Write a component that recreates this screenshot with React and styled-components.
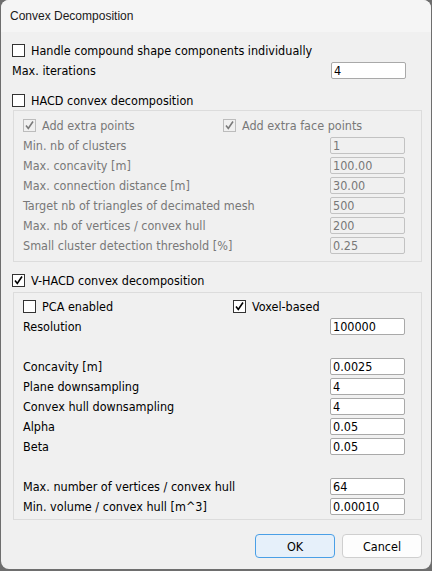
import React from 'react';
import styled, { createGlobalStyle } from 'styled-components';

const GlobalStyle = createGlobalStyle`
  html, body {
    margin: 0;
    padding: 0;
    background: #6e6e6e;
  }
  * { box-sizing: border-box; }
`;

const Window = styled.div`
  width: 430px;
  height: 569px;
  margin: 0 1px;
  background: #f0f0f0;
  border-radius: 8px;
  overflow: hidden;
  display: flex;
  flex-direction: column;
  font-family: "DejaVu Sans Condensed", "DejaVu Sans", sans-serif;
  font-size: 12.5px;
  color: #000;
`;

const TitleBar = styled.div`
  height: 32px;
  flex: none;
  background: #f5f5f5;
  display: flex;
  align-items: center;
  padding-left: 9px;
  font-family: "Liberation Sans", Arial, sans-serif;
  font-size: 12px;
  color: #1a1a1a;
`;

const Body = styled.div`
  flex: 1;
  padding: 8px 9px 0 11px;
  display: flex;
  flex-direction: column;
`;

const Section = styled.div`
  padding-right: 16px;
`;

const Row = styled.div`
  height: 20px;
  display: grid;
  grid-template-columns: ${(p) => (p.$split ? `${p.$split}px 1fr` : '1fr 75px')};
  align-items: center;
  color: ${(p) => (p.$disabled ? '#787878' : '#000')};
`;

const CheckLabel = styled.label`
  display: flex;
  align-items: center;
  gap: 6px;
  white-space: nowrap;
  color: ${(p) => (p.$disabled ? '#787878' : '#000')};
`;

const Box = styled.span`
  width: 13px;
  height: 13px;
  flex: none;
  border: 1px solid ${(p) => (p.$disabled ? '#bcbcbc' : '#333')};
  background: ${(p) => (p.$disabled ? '#f0f0f0' : '#fff')};
  display: flex;
  align-items: center;
  justify-content: center;
`;

const Field = styled.div`
  height: 17px;
  border: 1px solid ${(p) => (p.$disabled ? '#c2c2c2' : '#a9a9a9')};
  border-radius: 2px;
  background: ${(p) => (p.$disabled ? '#f0f0f0' : '#fff')};
  color: ${(p) => (p.$disabled ? '#787878' : '#000')};
  padding-left: 2px;
  line-height: 15px;
  font-size: 12.5px;
`;

const Group = styled.div`
  border: 1px solid #dcdcdc;
  margin-left: 1px;
  padding: ${(p) => p.$pad};
`;

const Spacer = styled.div`
  height: ${(p) => p.$h}px;
`;

const Footer = styled.div`
  display: flex;
  justify-content: flex-end;
  gap: 7px;
  padding-top: 14px;
`;

const Button = styled.button`
  width: 80px;
  height: 24px;
  border-radius: 4px;
  border: 1px solid ${(p) => (p.$primary ? '#4a9fe6' : '#cfcfcf')};
  background: ${(p) => (p.$primary ? '#e6f0fa' : '#fdfdfd')};
  font-family: "DejaVu Sans Condensed", "DejaVu Sans", sans-serif;
  font-size: 12.5px;
  color: #000;
  padding: 0;
`;

function Check({ checked, disabled }) {
  return (
    <Box $disabled={disabled}>
      {checked && (
        <svg width="11" height="11" viewBox="0 0 11 11">
          <path
            d="M2 5.5 L4.3 8.5 L9 1.5"
            fill="none"
            stroke={disabled ? '#7a7a7a' : '#000'}
            strokeWidth="1.6"
          />
        </svg>
      )}
    </Box>
  );
}

function CheckBox({ label, checked, disabled }) {
  return (
    <CheckLabel $disabled={disabled}>
      <Check checked={checked} disabled={disabled} />
      {label}
    </CheckLabel>
  );
}

function FieldRow({ label, value, disabled }) {
  return (
    <Row $disabled={disabled}>
      <span>{label}</span>
      <Field $disabled={disabled}>{value}</Field>
    </Row>
  );
}

const hacdFields = [
  ['Min. nb of clusters', '1'],
  ['Max. concavity [m]', '100.00'],
  ['Max. connection distance [m]', '30.00'],
  ['Target nb of triangles of decimated mesh', '500'],
  ['Max. nb of vertices / convex hull', '200'],
  ['Small cluster detection threshold [%]', '0.25'],
];

export default function App() {
  return (
    <>
      <GlobalStyle />
      <Window>
        <TitleBar>Convex Decomposition</TitleBar>
        <Body>
          <Section>
            <Row>
              <CheckBox label="Handle compound shape components individually" />
            </Row>
            <FieldRow label="Max. iterations" value="4" />
            <Spacer $h={10} />
            <Row>
              <CheckBox label="HACD convex decomposition" />
            </Row>
          </Section>
          <Group $pad="4px 16px 6px 9px">
            <Row $split={200}>
              <CheckBox label="Add extra points" checked disabled />
              <CheckBox label="Add extra face points" checked disabled />
            </Row>
            {hacdFields.map(([label, value]) => (
              <FieldRow key={label} label={label} value={value} disabled />
            ))}
          </Group>
          <Spacer $h={8} />
          <Row>
            <CheckBox label="V-HACD convex decomposition" checked />
          </Row>
          <Spacer $h={2} />
          <Group $pad="3px 16px 3px 9px">
            <Row $split={210}>
              <CheckBox label="PCA enabled" />
              <CheckBox label="Voxel-based" checked />
            </Row>
            <FieldRow label="Resolution" value="100000" />
            <Spacer $h={20} />
            <FieldRow label="Concavity [m]" value="0.0025" />
            <FieldRow label="Plane downsampling" value="4" />
            <FieldRow label="Convex hull downsampling" value="4" />
            <FieldRow label="Alpha" value="0.05" />
            <FieldRow label="Beta" value="0.05" />
            <Spacer $h={20} />
            <FieldRow label="Max. number of vertices / convex hull" value="64" />
            <FieldRow label="Min. volume / convex hull [m^3]" value="0.00010" />
          </Group>
          <Footer>
            <Button $primary>OK</Button>
            <Button>Cancel</Button>
          </Footer>
        </Body>
      </Window>
    </>
  );
}
